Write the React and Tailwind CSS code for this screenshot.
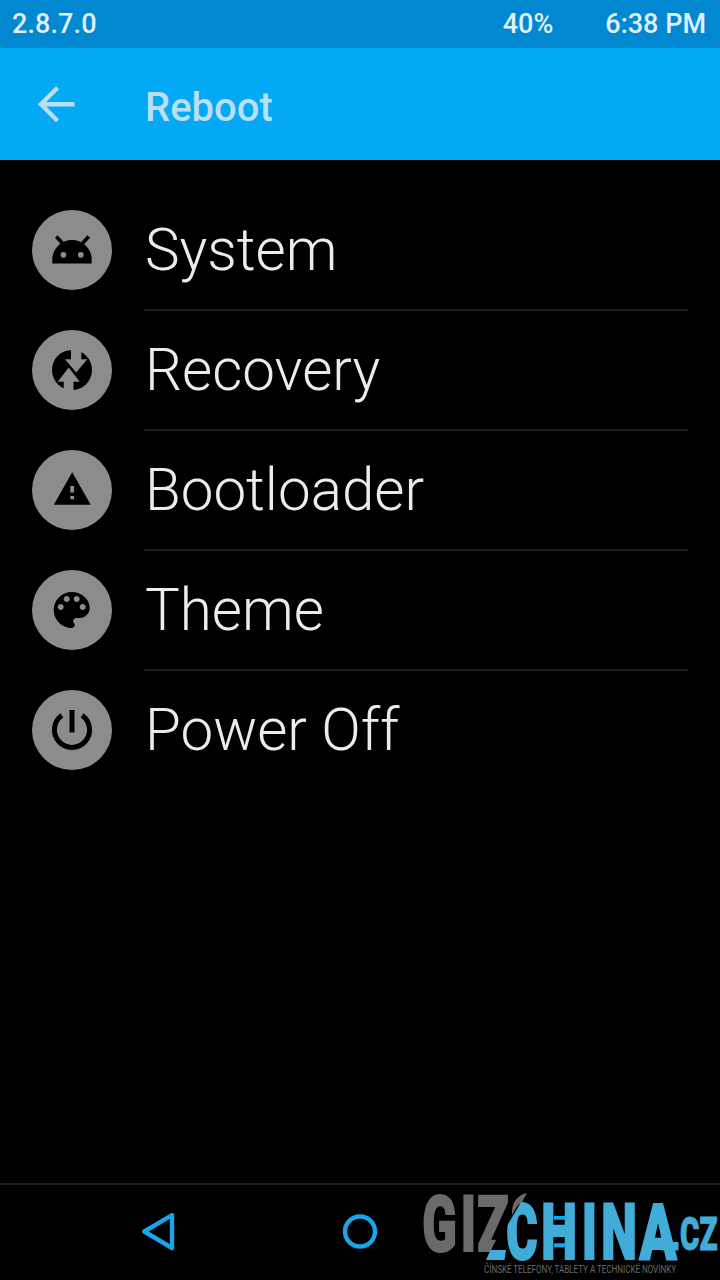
const ITEMS = [
  { label: 'System', Icon: AndroidIcon },
  { label: 'Recovery', Icon: RecoveryIcon },
  { label: 'Bootloader', Icon: WarningIcon },
  { label: 'Theme', Icon: PaletteIcon },
  { label: 'Power Off', Icon: PowerIcon },
];

function AndroidIcon() {
  return (
    <svg className="size-20" viewBox="0 0 80 80">
      <path d="M20.3 53.5V49.5a19.7 19.5 0 0139.4 0v4z" />
      <path d="M24.3 26.5l6.6 7.2M56.7 26.5l-6.6 7.2" stroke="#000" strokeWidth="3.6" />
      <circle cx="31.4" cy="44.8" r="2.9" fill="#8c8c8c" />
      <circle cx="48.8" cy="44.8" r="2.9" fill="#8c8c8c" />
    </svg>
  );
}

function RecoveryIcon() {
  return (
    <svg className="size-20" viewBox="0 0 80 80">
      <circle cx="40" cy="40" r="20" />
      <path
        fill="#8c8c8c"
        d="M39 18h10.3v11.3h6L44.2 42.5 33 29.3h6zM36.7 37.5l11 14.2h-6.2V62h-9.8V51.7h-6z"
      />
    </svg>
  );
}

function WarningIcon() {
  return (
    <svg className="size-20" viewBox="0 0 80 80">
      <path d="M40.2 22.3l18.5 32.4H21.8z" />
      <path fill="#8c8c8c" d="M38.3 36h3.8v6.5h-3.8zM38.3 46h3.8v3.3h-3.8z" />
    </svg>
  );
}

function PaletteIcon() {
  return (
    <svg className="size-20" viewBox="0 0 80 80">
      <path
        transform="translate(15.7 16) scale(2)"
        d="M12 3c-4.97 0-9 4.03-9 9s4.03 9 9 9c.83 0 1.5-.67 1.5-1.5 0-.39-.15-.74-.39-1.01-.23-.26-.38-.61-.38-.99 0-.83.67-1.5 1.5-1.5H16c2.76 0 5-2.24 5-5 0-4.42-4.03-8-9-8zm-5.5 9c-.83 0-1.5-.67-1.5-1.5S5.67 9 6.5 9 8 9.67 8 10.5 7.33 12 6.5 12zm3-4C8.67 8 8 7.33 8 6.5S8.67 5 9.5 5s1.5.67 1.5 1.5S10.33 8 9.5 8zm5 0c-.83 0-1.5-.67-1.5-1.5S13.67 5 14.5 5s1.5.67 1.5 1.5S15.33 8 14.5 8zm3 4c-.83 0-1.5-.67-1.5-1.5S16.67 9 17.5 9s1.5.67 1.5 1.5-.67 1.5-1.5 1.5z"
      />
    </svg>
  );
}

function PowerIcon() {
  return (
    <svg className="size-20" viewBox="0 0 80 80" fill="none" stroke="#000" strokeWidth="5">
      <path d="M40 20v22.5M29.9 25.4a17.6 17.6 0 1020.2 0" />
    </svg>
  );
}

function Logo() {
  return (
    <svg
      className="absolute left-[410px] top-[1175px]"
      width="310"
      height="105"
      viewBox="0 0 310 105"
      fontFamily="Roboto, sans-serif"
      fontWeight="900"
    >
      <clipPath id="z-cut">
        <path d="M60 10h45v20L84.5 64l1.5 1-7 14H60z" />
      </clipPath>
      <clipPath id="c-cut">
        <path d="M113 24h20v66H94V56z" />
      </clipPath>
      <g fill="#6a6a6a" stroke="#6a6a6a" strokeWidth="2">
        <text transform="translate(12.3 75.5) scale(.65 1)" fontSize="78">G</text>
        <text transform="translate(50.8 75.5) scale(.65 1)" fontSize="78">I</text>
        <g clipPath="url(#z-cut)">
          <text transform="translate(67.3 75.5) scale(.66 1)" fontSize="78">Z</text>
        </g>
        <path stroke="none" d="M102 40c-1-10 4-20 15-22l-5 9c-5 3-7 8-10 13z" />
      </g>
      <g fill="#42acd9" stroke="#42acd9" strokeWidth="2">
        <path stroke="none" d="M80.5 75H96l-1.5 10H76z" />
        <g clipPath="url(#c-cut)">
          <text transform="translate(96.3 84) scale(.62 1)" fontSize="77">C</text>
        </g>
        <text transform="translate(131.3 84.3) scale(.65 1)" fontSize="78">H</text>
        <text transform="translate(171.8 84.3) scale(.65 1)" fontSize="78">I</text>
        <text transform="translate(191.3 84.3) scale(.65 1)" fontSize="78">N</text>
        <text transform="translate(229.5 84.3) scale(.7 1)" fontSize="78">A</text>
        <path stroke="none" d="M252 67h16.5v8.500H252z" />
        <text transform="translate(270 75.3) scale(.63 1)" fontSize="47" strokeWidth="1">CZ</text>
      </g>
      {/* ladder rungs between the stems of the H */}
      <path fill="#12a5f0" d="M144 41h12.500v3.800H144zM144 68.300h12.500v4H144z" />
      <text x="74" y="97.7" fontSize="10.5" fontWeight="400" fill="#6a6a6a" textLength="192" lengthAdjust="spacingAndGlyphs">
        ČÍNSKÉ TELEFONY, TABLETY A TECHNICKÉ NOVINKY
      </text>
    </svg>
  );
}

export default function App() {
  return (
    <div className="relative flex h-[1280px] w-[720px] flex-col overflow-hidden bg-black font-['Roboto',sans-serif]">
      <header>
        <div className="flex h-12 items-center bg-[#0288d1] pl-3 pr-3.5 pt-px text-[27px] font-medium text-[#e0f0f9]">
          <span className="flex-1 tracking-[0.1px]">2.8.7.0</span>
          <span className="mr-[52px]">40%</span>
          <span>6:38 PM</span>
        </div>
        <div className="flex h-28 items-center bg-[#03a9f4] pl-9 text-[40px] font-medium text-[#b9dff0]">
          <svg className="mr-[69px] size-10" viewBox="0 0 40 40" fill="none" stroke="currentColor" strokeWidth="4.4">
            <path d="M38.5 20.3H6M21.5 3.8L5 20.3l16.5 16.5" />
          </svg>
          <h1 className="pt-[7px]">Reboot</h1>
        </div>
      </header>

      <ul className="mt-[30px] flex-1 px-8">
        {ITEMS.map(({ label, Icon }, i) => (
          <li key={label} className="flex h-[120px] items-center gap-8">
            <span className="size-20 shrink-0 rounded-full bg-[#8c8c8c]">
              <Icon />
            </span>
            <span
              className={`flex h-[122px] flex-1 items-center border-b-2 pl-px pt-1 text-[58.3px] font-light text-[#ececec] ${
                i < ITEMS.length - 1 ? 'border-[#1e1e1e]' : 'border-transparent'
              }`}
            >
              {label}
            </span>
          </li>
        ))}
      </ul>

      <nav className="flex h-[97px] items-center border-t-2 border-[#1e1e1e] pb-px pl-[140px] text-[#19a4ec]">
        <svg className="size-10" viewBox="0 0 40 40" fill="none" stroke="currentColor" strokeWidth="4.4" strokeLinejoin="round">
          <path d="M4.3 19.5L32 3.2v32.8z" />
        </svg>
        <svg className="ml-40 size-10" viewBox="0 0 40 40" fill="none" stroke="currentColor" strokeWidth="4.4">
          <circle cx="20" cy="19.5" r="15" />
        </svg>
      </nav>
      <Logo />
    </div>
  );
}
